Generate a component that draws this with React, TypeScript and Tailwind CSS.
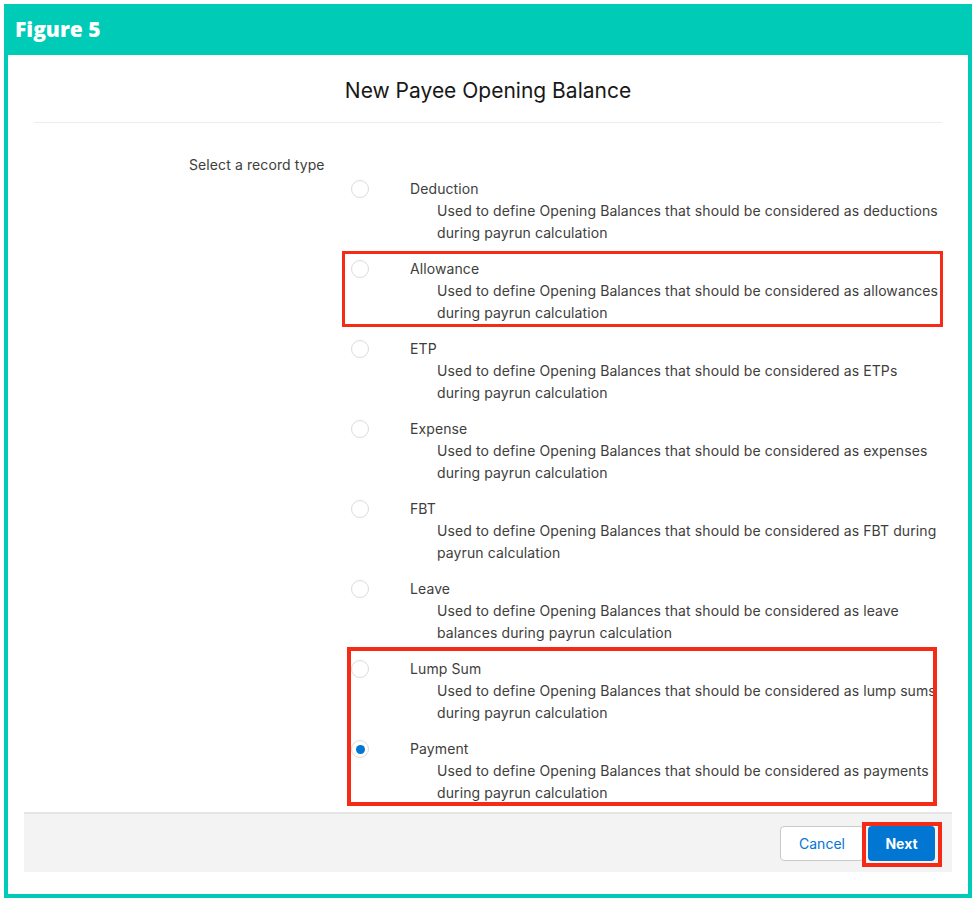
import React from 'react';

const options = [
  { label: 'Deduction', desc: ['Used to define Opening Balances that should be considered as deductions', 'during payrun calculation'] },
  { label: 'Allowance', desc: ['Used to define Opening Balances that should be considered as allowances', 'during payrun calculation'] },
  { label: 'ETP', desc: ['Used to define Opening Balances that should be considered as ETPs', 'during payrun calculation'] },
  { label: 'Expense', desc: ['Used to define Opening Balances that should be considered as expenses', 'during payrun calculation'] },
  { label: 'FBT', desc: ['Used to define Opening Balances that should be considered as FBT during', 'payrun calculation'] },
  { label: 'Leave', desc: ['Used to define Opening Balances that should be considered as leave', 'balances during payrun calculation'] },
  { label: 'Lump Sum', desc: ['Used to define Opening Balances that should be considered as lump sums', 'during payrun calculation'] },
  { label: 'Payment', desc: ['Used to define Opening Balances that should be considered as payments', 'during payrun calculation'] },
];

function Radio({ checked }: { checked: boolean }) {
  return (
    <span className="flex h-[18px] w-[18px] shrink-0 items-center justify-center rounded-full border border-[#dcdcdc] bg-white">
      {checked && <span className="h-[9px] w-[9px] rounded-full bg-[#0176d3]" />}
    </span>
  );
}

export default function App() {
  const [selected, setSelected] = React.useState('Payment');

  return (
    <div className="relative h-[902px] w-[976px] bg-white p-1 font-['Inter',Arial,sans-serif]">
      <div className="flex h-full flex-col bg-[#00cbb7] px-1 pb-1">
        <div className="flex h-[51px] items-center px-[7px] font-['Open_Sans',sans-serif] text-[21px] font-extrabold text-white">
          Figure 5
        </div>

        <div className="flex flex-1 flex-col bg-white">
          <div className="mx-[26px] flex h-[68px] items-center justify-center border-b border-[#ececec] pt-[4px]">
            <h2 className="text-[21px] text-[#181818]">New Payee Opening Balance</h2>
          </div>

          <div className="flex flex-1 pt-[31px] text-[14px] leading-[22px] tracking-[0.1px] text-[#3e3e3c]">
            <div className="w-[343px] shrink-0 pl-[181px]">Select a record type</div>
            <div className="flex flex-col gap-[14px] pt-[24px]">
              {options.map((o) => (
                <label key={o.label} className="flex cursor-pointer" onClick={() => setSelected(o.label)}>
                  <span className="flex h-[22px] w-[59px] items-center">
                    <Radio checked={selected === o.label} />
                  </span>
                  <span className="flex flex-col">
                    <span>{o.label}</span>
                    <span className="pl-[27px]">
                      {o.desc.map((d) => (
                        <span key={d} className="block whitespace-nowrap">{d}</span>
                      ))}
                    </span>
                  </span>
                </label>
              ))}
            </div>
          </div>

          <div className="mx-4 mb-[22px] flex h-[60px] items-center justify-end gap-1 border-t-2 border-[#e5e5e5] bg-[#f3f3f3] pr-[17px]">
            <button className="h-[35px] w-[84px] rounded-[4px] border border-[#c9c9c9] bg-white text-[14px] text-[#0176d3]">
              Cancel
            </button>
            <button className="h-[35px] w-[67px] rounded-[4px] bg-[#0176d3] text-[14px] font-bold text-white">
              Next
            </button>
          </div>
        </div>
      </div>

      <div className="pointer-events-none absolute left-[342px] top-[251px] h-[76px] w-[601px] border-[3px] border-[#f52a17]" />
      <div className="pointer-events-none absolute left-[347px] top-[647px] h-[159px] w-[590px] border-[4px] border-[#f52a17]" />
      <div className="pointer-events-none absolute left-[862px] top-[822px] h-[45px] w-[80px] border-[4px] border-[#f52a17]" />
    </div>
  );
}
